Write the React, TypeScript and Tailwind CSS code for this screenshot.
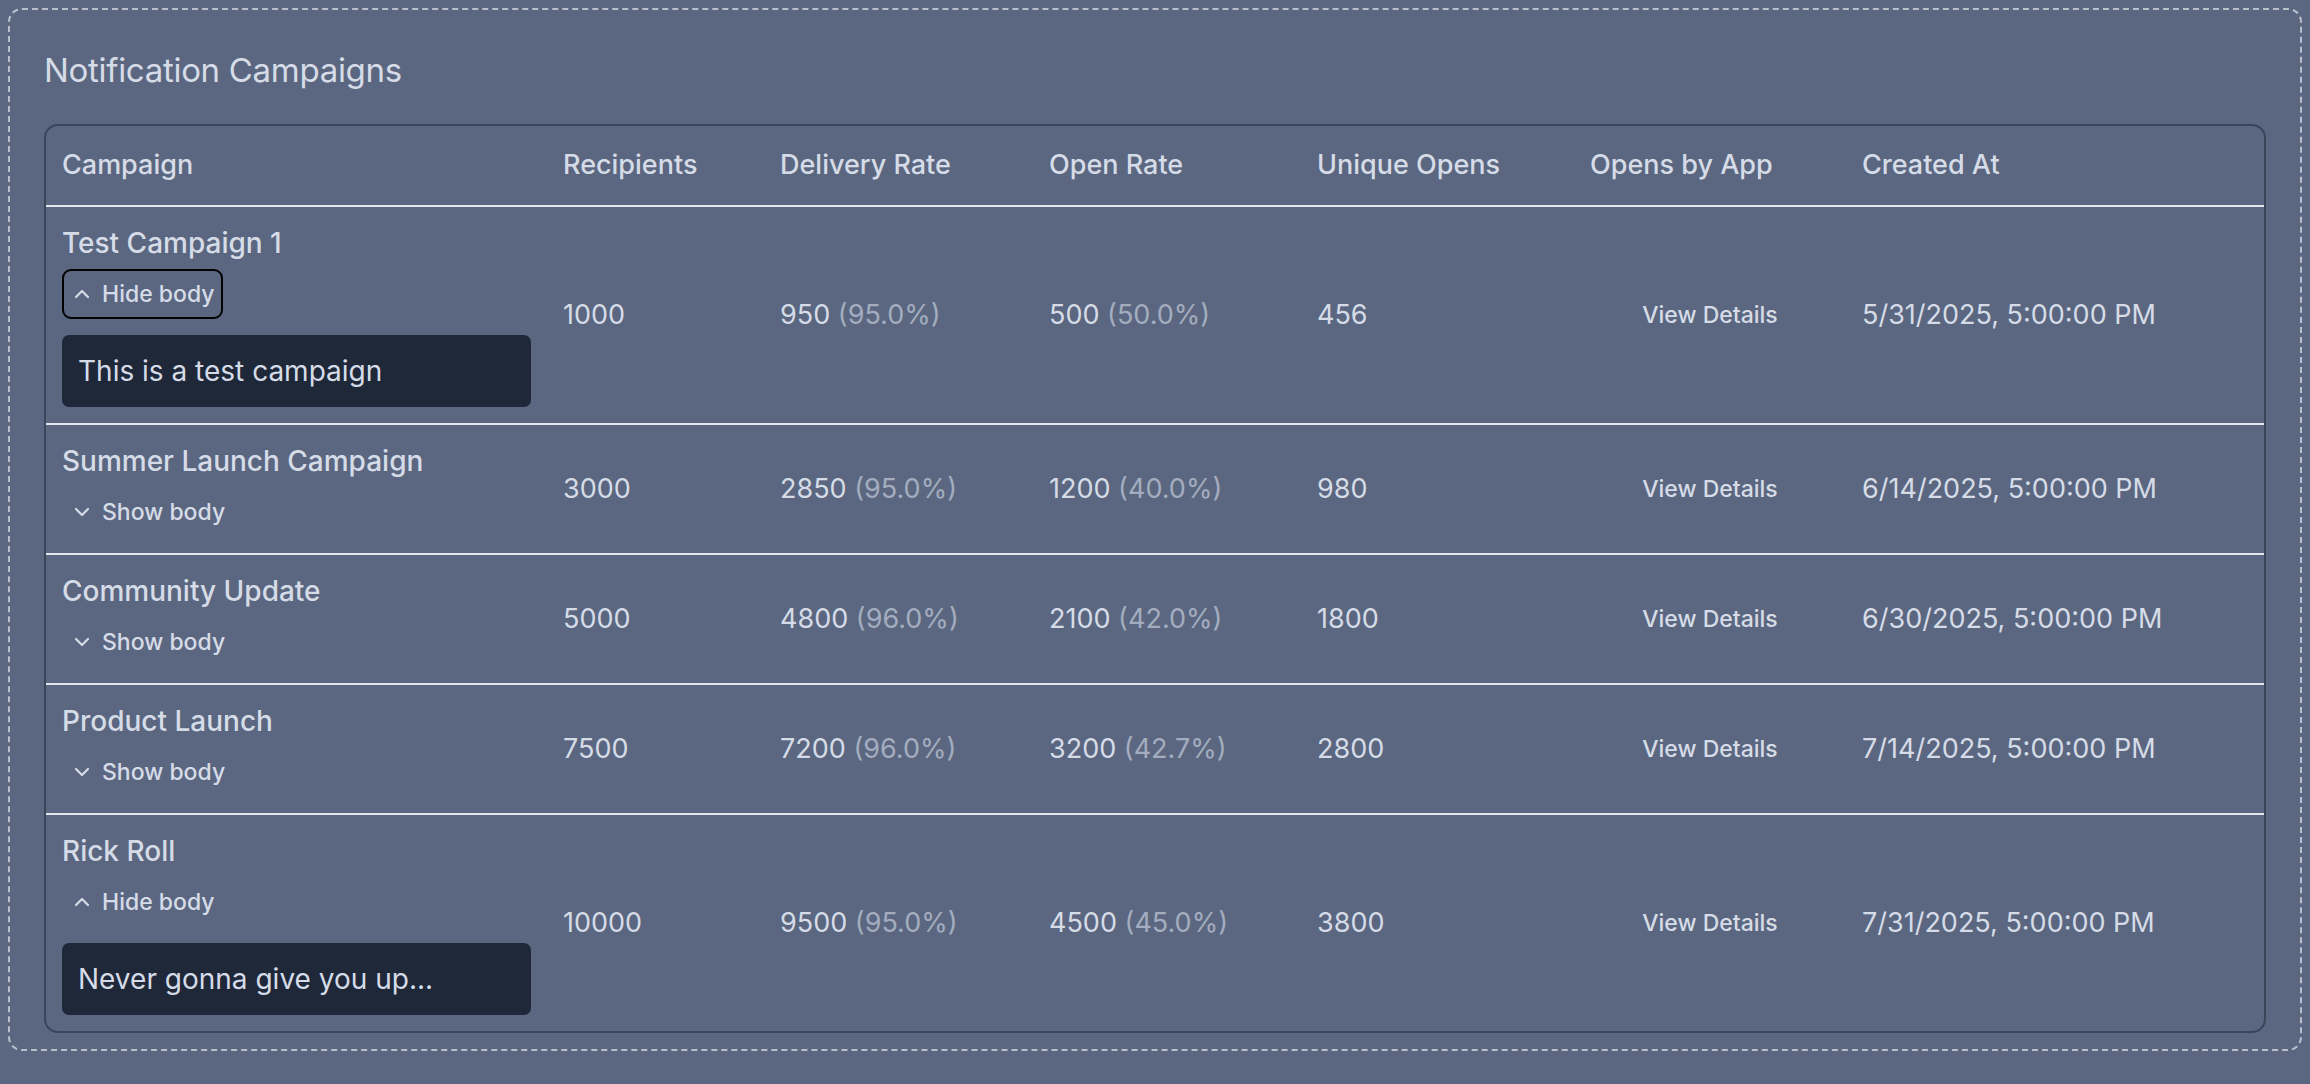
import { ChevronDown, ChevronUp } from "lucide-react";

type Campaign = {
  name: string;
  body: string;
  open: boolean;
  focused?: boolean;
  recipients: number;
  delivered: number;
  opened: number;
  unique: number;
  created: string;
};

const campaigns: Campaign[] = [
  { name: "Test Campaign 1", body: "This is a test campaign", open: true, focused: true, recipients: 1000, delivered: 950, opened: 500, unique: 456, created: "5/31/2025, 5:00:00 PM" },
  { name: "Summer Launch Campaign", body: "", open: false, recipients: 3000, delivered: 2850, opened: 1200, unique: 980, created: "6/14/2025, 5:00:00 PM" },
  { name: "Community Update", body: "", open: false, recipients: 5000, delivered: 4800, opened: 2100, unique: 1800, created: "6/30/2025, 5:00:00 PM" },
  { name: "Product Launch", body: "", open: false, recipients: 7500, delivered: 7200, opened: 3200, unique: 2800, created: "7/14/2025, 5:00:00 PM" },
  { name: "Rick Roll", body: "Never gonna give you up...", open: true, recipients: 10000, delivered: 9500, opened: 4500, unique: 3800, created: "7/31/2025, 5:00:00 PM" },
];

const cols = "grid grid-cols-[501px_217px_269px_268px_273px_272px_1fr]";
const pct = (a: number, b: number) => ((a / b) * 100).toFixed(1) + "%";

export default function App() {
  return (
    <div
      className="min-h-[1084px] bg-[#5b6780] p-[8px] text-[#d6dce7]"
      style={{ fontFamily: "Inter, 'Noto Sans', sans-serif" }}
    >
      <div className="rounded-[14px] border-2 border-dashed border-[#b9c0cc] px-[34px] pt-[40px] pb-[16px]">
        <h1 className="mb-[34px] text-[33px] leading-[40px] tracking-[-0.3px]">Notification Campaigns</h1>
        <div className="overflow-hidden rounded-[14px] border-2 border-[#3a4559]">
          <div className={`${cols} h-[81px] items-center border-b-2 border-[#e2e6ec] text-[27px] font-medium`}>
            {["Campaign", "Recipients", "Delivery Rate", "Open Rate", "Unique Opens", "Opens by App", "Created At"].map((h) => (
              <div key={h} className="px-[16px]">{h}</div>
            ))}
          </div>
          {campaigns.map((c, i) => (
            <div
              key={c.name}
              className={`${cols} items-center text-[27px] ${i < campaigns.length - 1 ? "border-b-2 border-[#e2e6ec]" : ""}`}
            >
              <div className="flex flex-col items-start px-[16px] pt-[16px] pb-[16px]">
                <div className="text-[28px] font-medium leading-[40px]">{c.name}</div>
                <button
                  className={`mt-[6px] flex h-[50px] items-center gap-[8px] rounded-[9px] border-2 px-[6px] text-[23px] font-medium ${c.focused ? "border-black" : "border-transparent"}`}
                >
                  {c.open ? <ChevronUp size={24} strokeWidth={2.2} /> : <ChevronDown size={24} strokeWidth={2.2} />}
                  {c.open ? "Hide body" : "Show body"}
                </button>
                {c.open && (
                  <div className="mt-[16px] flex h-[72px] w-full items-center rounded-[7px] bg-[#1f2839] px-[16px] text-[28px]">
                    {c.body}
                  </div>
                )}
              </div>
              <div className="px-[16px]">{c.recipients}</div>
              <div className="px-[16px]">
                {c.delivered} <span className="text-[#a3adbf]">({pct(c.delivered, c.recipients)})</span>
              </div>
              <div className="px-[16px]">
                {c.opened} <span className="text-[#a3adbf]">({pct(c.opened, c.recipients)})</span>
              </div>
              <div className="px-[16px]">{c.unique}</div>
              <div className="flex justify-center px-[16px] text-[23px] font-medium">View Details</div>
              <div className="px-[16px]">{c.created}</div>
            </div>
          ))}
        </div>
      </div>
    </div>
  );
}
